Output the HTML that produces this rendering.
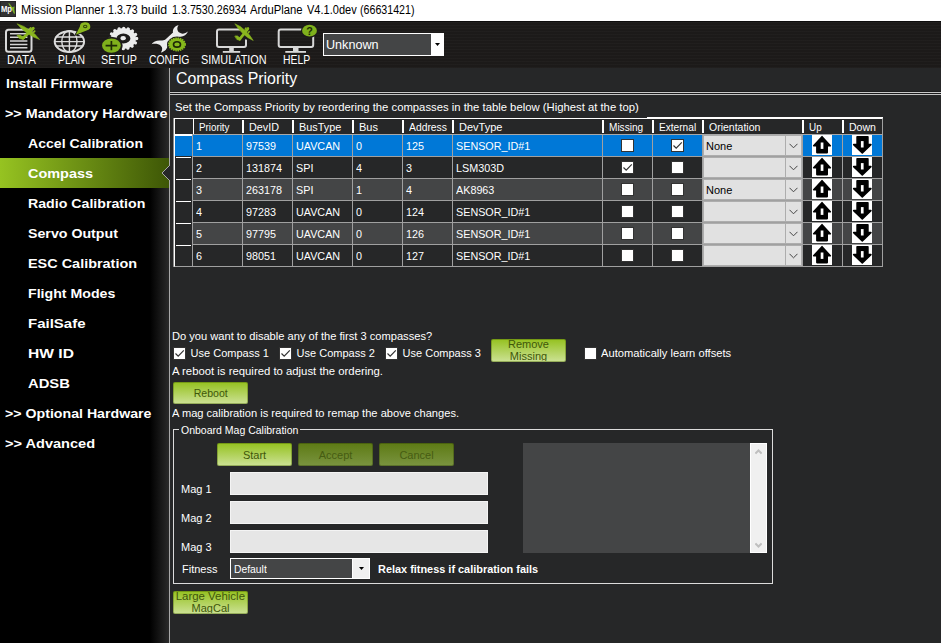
<!DOCTYPE html>
<html lang="en">
<head>
<meta charset="utf-8">
<title>Mission Planner</title>
<style>
*{box-sizing:border-box;margin:0;padding:0}
html,body{width:941px;height:643px;overflow:hidden}
body{position:relative;background:#262728;font-family:"Liberation Sans",sans-serif;font-size:11px;color:#fff}
.abs{position:absolute}
.t{position:absolute;white-space:nowrap;line-height:14px;font-size:11px}
#titlebar{left:0;top:0;width:941px;height:21px;background:#fff}
#title{left:21px;top:2px;font-size:12px;line-height:16px;color:#000}
#toolbar{left:0;top:21px;width:941px;height:47px;background:#1d1b1a;background-image:repeating-linear-gradient(180deg,rgba(255,255,255,0.015) 0,rgba(255,255,255,0.015) 1px,rgba(0,0,0,0.04) 1px,rgba(0,0,0,0.04) 3px);border-top:1px solid #0e0d0d}
.tl{position:absolute;top:53px;font-size:12px;line-height:14px;color:#fff;white-space:nowrap}
#side{left:0;top:68px;width:169px;height:575px;background:linear-gradient(90deg,#000 0,#000 150px,#2a2a2a 169px)}
#vline{left:169px;top:68px;width:1px;height:575px;background:#a8a8a8}
.mi{position:absolute;left:0;width:169px;height:30px;padding-top:1px;font-weight:bold;font-size:13px;line-height:30px;white-space:nowrap;color:#fff}
.mi.sel{background:linear-gradient(90deg,#96c321 0,#3e5706 100%)}
#hdr{left:175.5px;top:68px;font-size:16px;line-height:22px}
.hl{position:absolute;left:170px;width:771px;height:1px}
.gh{position:absolute;top:119px;font-size:11px;line-height:16px;white-space:nowrap}
.sep{position:absolute;top:120px;width:2px;height:13px;background:#fff}
.row{position:absolute;left:175px;width:707px;height:21px}
.c{position:absolute;font-size:11px;line-height:23px;white-space:nowrap}
.vl{position:absolute;top:135px;width:1px;height:132px;background:#a0a0a0}
.hg{position:absolute;left:193px;width:690px;height:1px;background:#a0a0a0}
.cb{position:absolute;width:13px;height:13px;background:#fff;border:1px solid #333}
.cb svg{position:absolute;left:0;top:0}
.combo{position:absolute;left:703px;width:99px;height:21px;background:#e1e1e1;border:1px solid #adadad;color:#000;font-size:11px;line-height:21px;padding-left:2px}
.combo i{position:absolute;left:81px;top:0;width:1px;height:19px;background:#adadad}
.combo svg{position:absolute;left:85px;top:7px}
.img{position:absolute;width:20px;height:20px;background:#fff}
.btn{position:absolute;width:75px;height:23px;border:1px solid rgba(70,95,5,0.4);border-radius:2px;background:linear-gradient(180deg,#94c11f,#cde296) border-box;color:#40570a;font-size:11px;text-align:center;line-height:21px;overflow:hidden}
.btn.dis{background:linear-gradient(180deg,#5d7a14,#7a9440) border-box;border-color:rgba(40,55,5,0.35);color:#465c12}
.btn.two{line-height:12px}
.inp{position:absolute;left:230px;width:258px;height:23px;background:#e6e6e6;border:1px solid #f4f4f4}
</style>
</head>
<body>
<div id="titlebar" class="abs"></div>
<div id="title" class="t" style="left:0;width:500px"><span style="position:absolute;left:20.98px;top:0;transform:scaleX(1.015);transform-origin:0 0;">Mission</span> <span style="position:absolute;left:65.25px;top:0;transform:scaleX(0.955);transform-origin:0 0;">Planner</span> <span style="position:absolute;left:108.31px;top:0;transform:scaleX(0.887);transform-origin:0 0;">1.3.73</span> <span style="position:absolute;left:140.88px;top:0;transform:scaleX(1.025);transform-origin:0 0;">build</span> <span style="position:absolute;left:171.71px;top:0;transform:scaleX(0.894);transform-origin:0 0;">1.3.7530.26934</span> <span style="position:absolute;left:250.3px;top:0;transform:scaleX(0.939);transform-origin:0 0;">ArduPlane</span> <span style="position:absolute;left:307.1px;top:0;transform:scaleX(0.919);transform-origin:0 0;">V4.1.0dev</span> <span style="position:absolute;left:360.41px;top:0;transform:scaleX(0.888);transform-origin:0 0;">(66631421)</span></div>
<div id="toolbar" class="abs"></div>
<div class="tl" id="tl_DATA" style="left:6.8px;transform:scaleX(0.956);transform-origin:0 0;">DATA</div>
<div class="tl" id="tl_PLAN" style="left:57.5px;transform:scaleX(0.863);transform-origin:0 0;">PLAN</div>
<div class="tl" id="tl_SETUP" style="left:101.3px;transform:scaleX(0.896);transform-origin:0 0;">SETUP</div>
<div class="tl" id="tl_CONFIG" style="left:148.8px;transform:scaleX(0.866);transform-origin:0 0;">CONFIG</div>
<div class="tl" id="tl_SIMULATION" style="left:200.8px;transform:scaleX(0.905);transform-origin:0 0;">SIMULATION</div>
<div class="tl" id="tl_HELP" style="left:282.8px;transform:scaleX(0.866);transform-origin:0 0;">HELP</div>
<svg class="abs" style="left:0;top:0" width="941" height="68" viewBox="0 0 941 68">
<defs>
<g id="plane" fill="#8ab61e" stroke="#8ab61e" stroke-linecap="round">
<path d="M0.6 0.5L6.9 3L12.7 6.6L18.2 10.95L22.8 16.1L16.3 13.45L10.3 9.8L4.8 5.3Z" stroke-width="0.6" stroke-linejoin="round"/>
<path d="M16.4 4.9L6.4 14.6" stroke-width="3"/>
<path d="M0.6 11.9L3.4 11.9L7.8 14.6L6.6 16L3 15.2Z" stroke-width="0.8" stroke-linejoin="round"/>
<path d="M12.9 5.4L13.9 4.4M16.9 8.8L17.9 7.8" stroke-width="1.7"/>
</g>
</defs>
<!-- title icon -->
<rect x="0" y="1" width="16" height="16" fill="#333"/>
<rect x="0.5" y="1.5" width="15" height="15" fill="none" stroke="#262626"/>
<path d="M8.2 3.2L9.6 3.6L12.2 7.2L14.6 6.6L14.2 9.2L15 13.6L14 13.8L12.2 10.2L11.4 8.2L9.4 5.6Z" fill="#7ab428"/>
<text x="1" y="12.4" font-family="Liberation Sans, sans-serif" font-size="8.6" font-weight="bold" fill="#fff" textLength="11" lengthAdjust="spacingAndGlyphs">Mp</text>
<!-- DATA -->
<rect x="6" y="29.7" width="25.5" height="22.1" rx="2.5" fill="#141312" stroke="#d8d8d8" stroke-width="2"/>
<path d="M10 33.7H27.4M10 37.3H27.4M10 41H27.4M10 44.4H27.4M10 47.8H27.4" stroke="#d4d4d4" stroke-width="1.5"/>
<use href="#plane" transform="translate(16.8 23.4)"/>
<!-- PLAN -->
<g fill="none" stroke="#dcdcdc" stroke-width="1.4">
<ellipse cx="69.4" cy="41.6" rx="14.7" ry="10.4" stroke-width="2"/>
<ellipse cx="69.4" cy="41.5" rx="7.6" ry="10.8"/>
<path d="M69.4 30.7V52.3M55.5 37H83.3M54.6 41.6H84.2M55.5 46H83.3"/>
</g>
<path d="M75.7 34.8L79.9 26.6A5.2 4.3 0 1 1 86.6 30.6Z" fill="#8ab61e" stroke="#1d1b1a" stroke-width="1.6" paint-order="stroke"/>
<ellipse cx="85.2" cy="26.4" rx="1.7" ry="1.2" fill="none" stroke="#33480a" stroke-width="1.1"/>
<!-- SETUP -->
<g>
<ellipse cx="123.4" cy="38.5" rx="13.3" ry="10.2" fill="none" stroke="#ececec" stroke-width="3.3" stroke-dasharray="0.01 4.62" stroke-linecap="round"/>
<ellipse cx="123.4" cy="38.5" rx="9.8" ry="7.7" fill="none" stroke="#ececec" stroke-width="5.6"/>
<ellipse cx="123.2" cy="38.2" rx="2.7" ry="2.1" fill="#ececec"/>
<ellipse cx="111.4" cy="45.6" rx="11.2" ry="8.8" fill="#1d1b1a"/>
<ellipse cx="111.4" cy="45.6" rx="9.4" ry="7.2" fill="#7fb01c"/>
<path d="M105.6 45.6H117.2M111.4 41V50.2" stroke="#1d2a05" stroke-width="1.7"/>
</g>
<!-- CONFIG -->
<g fill="#ececec">
<path d="M178.6 24.9C175.2 25.8 172.2 29 173 32.4L165.4 39.4C164 40.6 161.5 40.4 159.4 40.4C156.2 40.4 152.8 42 151.6 44.2C154.5 43.6 158.6 43.6 160.8 45.8C162.8 47.8 162.6 50.2 160.8 52.5C164.6 51.8 167.8 48.6 167.4 45.2L174.8 38.4C176.4 37 178.6 37 180.6 36.8C183.8 36.6 186.8 34.4 188 31.5C185.6 33.4 182 34.6 179.4 32.6C176.8 30.6 176.8 27.4 178.6 24.9Z"/>
</g>
<ellipse cx="177" cy="44.4" rx="10" ry="7.8" fill="#1d1b1a"/>
<ellipse cx="177" cy="44.4" rx="8.1" ry="6.1" fill="#86b81c" stroke="#86b81c" stroke-width="1.8" stroke-dasharray="1.5 0.75"/>
<ellipse cx="177" cy="44.4" rx="3.5" ry="2.7" fill="none" stroke="#1c2606" stroke-width="1.6"/>
<!-- SIMULATION -->
<rect x="217" y="29.5" width="29" height="17.5" rx="2" fill="none" stroke="#d8d8d8" stroke-width="2"/>
<rect x="229.2" y="48" width="4.6" height="3.2" fill="#d8d8d8"/>
<rect x="222.8" y="51" width="17.4" height="1.8" fill="#d8d8d8"/>
<path d="M240 27L250 27L250 37L246 40L240 33Z" fill="#1d1b1a"/>
<use href="#plane" transform="translate(234.7 23.4) scale(0.813 1.06)"/>
<!-- HELP -->
<rect x="278.7" y="29.5" width="34.5" height="17.5" rx="2" fill="none" stroke="#d8d8d8" stroke-width="2"/>
<rect x="293" y="48" width="5.5" height="3.2" fill="#d8d8d8"/>
<rect x="285.3" y="51" width="20.7" height="1.8" fill="#d8d8d8"/>
<ellipse cx="309.5" cy="30.7" rx="8.6" ry="7" fill="#1d1b1a"/>
<ellipse cx="309.5" cy="30.7" rx="7.4" ry="5.9" fill="#7fb01c"/>
<text x="306.3" y="34.6" font-family="Liberation Sans, sans-serif" font-size="10.5" font-weight="bold" fill="#1d2a05" textLength="6.6" lengthAdjust="spacingAndGlyphs">?</text>
</svg>
<div class="abs" style="left:323px;top:33px;width:121px;height:23px;background:#fff"></div>
<div class="abs" style="left:324px;top:34px;width:107px;height:21px;background:#444546"></div>
<div class="t" id="unk" style="left:326px;top:36.5px;font-size:12px;line-height:16px;transform:scaleX(1.05);transform-origin:0 0;">Unknown</div>
<svg class="abs" style="left:435px;top:43px" width="5" height="3"><path d="M0 0h5L2.5 3z" fill="#000"/></svg>
<div id="side" class="abs"></div>
<div id="vline" class="abs"></div>
<div class="mi" style="top:68px;padding-left:5.5px"><span style="display:inline-block;transform:scaleX(1.08);transform-origin:0 50%">Install Firmware</span></div>
<div class="mi" style="top:98px;padding-left:4.9px"><span style="display:inline-block;transform:scaleX(1.102);transform-origin:0 50%">&gt;&gt; Mandatory Hardware</span></div>
<div class="mi" style="top:128px;padding-left:27.5px"><span style="display:inline-block;transform:scaleX(1.083);transform-origin:0 50%">Accel Calibration</span></div>
<div class="mi sel" style="top:158px;padding-left:27.5px"><span style="display:inline-block;transform:scaleX(1.112);transform-origin:0 50%">Compass</span></div>
<div class="mi" style="top:188px;padding-left:28px"><span style="display:inline-block;transform:scaleX(1.09);transform-origin:0 50%">Radio Calibration</span></div>
<div class="mi" style="top:218px;padding-left:27.5px"><span style="display:inline-block;transform:scaleX(1.092);transform-origin:0 50%">Servo Output</span></div>
<div class="mi" style="top:248px;padding-left:28px"><span style="display:inline-block;transform:scaleX(1.11);transform-origin:0 50%">ESC Calibration</span></div>
<div class="mi" style="top:278px;padding-left:28px"><span style="display:inline-block;transform:scaleX(1.089);transform-origin:0 50%">Flight Modes</span></div>
<div class="mi" style="top:308px;padding-left:28px"><span style="display:inline-block;transform:scaleX(1.153);transform-origin:0 50%">FailSafe</span></div>
<div class="mi" style="top:338px;padding-left:28px"><span style="display:inline-block;transform:scaleX(1.2);transform-origin:0 50%">HW ID</span></div>
<div class="mi" style="top:368px;padding-left:27.7px"><span style="display:inline-block;transform:scaleX(1.138);transform-origin:0 50%">ADSB</span></div>
<div class="mi" style="top:398px;padding-left:5.2px"><span style="display:inline-block;transform:scaleX(1.09);transform-origin:0 50%">&gt;&gt; Optional Hardware</span></div>
<div class="mi" style="top:428px;padding-left:5.2px"><span style="display:inline-block;transform:scaleX(1.12);transform-origin:0 50%">&gt;&gt; Advanced</span></div>
<svg class="abs" style="left:162px;top:165px" width="8" height="16"><path d="M8 0L0 8L8 16z" fill="#262728"/><path d="M8 0L0 8L8 16" fill="none" stroke="#a8a8a8" stroke-width="1"/></svg>
<div id="hdr" class="t" style="transform:scaleX(0.995);transform-origin:0 0;">Compass Priority</div>
<div class="hl" style="top:91px;background:#1c1c1d"></div>
<div class="hl" style="top:92px;background:#c8c8c8"></div>
<div class="hl" style="top:93px;background:#1a1a1b"></div>
<div class="hl" style="top:94px;background:#c4c4c4"></div>
<div class="t" id="settxt" style="left:174.8px;top:100px;transform:scaleX(1.0264);transform-origin:0 0;">Set the Compass Priority by reordering the compasses in the table below (Highest at the top)</div>
<div class="abs" style="left:174px;top:118px;width:709px;height:149px;border:1px solid #a0a0a0;border-top-color:#fff;border-left-color:#fff"></div>
<div class="abs" style="left:647px;top:117px;width:236px;height:1px;background:#fff"></div>
<div class="abs" style="left:173px;top:118px;width:1px;height:149px;background:#8c8c8c"></div>
<div class="abs" style="left:175px;top:134px;width:707px;height:1px;background:#a8a8a8"></div>
<div class="abs" style="left:175px;top:134px;width:17px;height:2px;background:#fff"></div>
<div class="sep" style="left:193px;top:119px;height:15px;width:1px"></div>
<div class="gh" style="left:199px;transform:scaleX(0.89);transform-origin:0 0;">Priority</div>
<div class="sep" style="left:242px"></div>
<div class="gh" style="left:249px;transform:scaleX(0.98);transform-origin:0 0;">DevID</div>
<div class="sep" style="left:292px"></div>
<div class="gh" style="left:299px;transform:scaleX(0.987);transform-origin:0 0;">BusType</div>
<div class="sep" style="left:352px"></div>
<div class="gh" style="left:359px;">Bus</div>
<div class="sep" style="left:402px"></div>
<div class="gh" style="left:409px;transform:scaleX(0.94);transform-origin:0 0;">Address</div>
<div class="sep" style="left:452px"></div>
<div class="gh" style="left:459px;">DevType</div>
<div class="sep" style="left:602px"></div>
<div class="gh" style="left:609px;transform:scaleX(0.915);transform-origin:0 0;">Missing</div>
<div class="sep" style="left:652px"></div>
<div class="gh" style="left:659px;transform:scaleX(0.92);transform-origin:0 0;">External</div>
<div class="sep" style="left:702px"></div>
<div class="gh" style="left:709px;transform:scaleX(0.954);transform-origin:0 0;">Orientation</div>
<div class="sep" style="left:802px"></div>
<div class="gh" style="left:809px;transform:scaleX(0.9);transform-origin:0 0;">Up</div>
<div class="sep" style="left:842px"></div>
<div class="gh" style="left:849px;transform:scaleX(0.955);transform-origin:0 0;">Down</div>
<div class="abs" style="left:193px;top:135px;width:689px;height:21px;background:#0078d7"></div>
<div class="abs" style="left:175px;top:136px;width:17px;height:20px;background:#0078d7"></div>
<div class="abs" style="left:176px;top:157px;width:15px;height:1px;background:#fff"></div>
<div class="c" style="left:196px;top:135px;transform:scaleX(0.98);transform-origin:0 0;">1</div>
<div class="c" style="left:246px;top:135px;transform:scaleX(0.98);transform-origin:0 0;">97539</div>
<div class="c" style="left:296px;top:135px;transform:scaleX(0.98);transform-origin:0 0;">UAVCAN</div>
<div class="c" style="left:356px;top:135px;transform:scaleX(0.98);transform-origin:0 0;">0</div>
<div class="c" style="left:406px;top:135px;transform:scaleX(0.98);transform-origin:0 0;">125</div>
<div class="c" style="left:456px;top:135px;transform:scaleX(0.98);transform-origin:0 0;">SENSOR_ID#1</div>
<div class="cb" style="left:621px;top:139px"></div>
<div class="cb" style="left:671px;top:139px"><svg width="11" height="11" viewBox="0 0 11 11"><path d="M1.5 5.5L4.2 8.2L9.8 2.4" fill="none" stroke="#333" stroke-width="1.2"/></svg></div>
<div class="combo" style="top:135px">None<i></i><svg width="9" height="6" viewBox="0 0 9 6"><path d="M0.5 0.8L4.5 4.8L8.5 0.8" fill="none" stroke="#444" stroke-width="1"/></svg></div>
<div class="img" style="left:812px;top:135px"><svg width="20" height="20" viewBox="0 0 20 20"><path d="M10 1.7L18.3 10.8H15.2V17.6H4.9V10.8H1.7Z" fill="#000" stroke="#000" stroke-width="1.6" stroke-linejoin="round"/><rect x="8.7" y="7.5" width="2.7" height="6.4" fill="#fff"/></svg></div>
<div class="img" style="left:852px;top:135px"><svg width="20" height="20" viewBox="0 0 20 20"><path d="M10.3 17.9L1.7 9.6H5.1V1.7H15.9V9.6H18.9Z" fill="#000" stroke="#000" stroke-width="1.6" stroke-linejoin="round"/><rect x="8.9" y="6.1" width="2.7" height="6.4" fill="#fff"/></svg></div>
<div class="hg" style="top:156px"></div>
<div class="abs" style="left:193px;top:157px;width:689px;height:21px;background:#262728"></div>
<div class="abs" style="left:176px;top:179px;width:15px;height:1px;background:#fff"></div>
<div class="c" style="left:196px;top:157px;transform:scaleX(0.98);transform-origin:0 0;">2</div>
<div class="c" style="left:246px;top:157px;transform:scaleX(0.98);transform-origin:0 0;">131874</div>
<div class="c" style="left:296px;top:157px;transform:scaleX(0.98);transform-origin:0 0;">SPI</div>
<div class="c" style="left:356px;top:157px;transform:scaleX(0.98);transform-origin:0 0;">4</div>
<div class="c" style="left:406px;top:157px;transform:scaleX(0.98);transform-origin:0 0;">3</div>
<div class="c" style="left:456px;top:157px;transform:scaleX(0.98);transform-origin:0 0;">LSM303D</div>
<div class="cb" style="left:621px;top:161px"><svg width="11" height="11" viewBox="0 0 11 11"><path d="M1.5 5.5L4.2 8.2L9.8 2.4" fill="none" stroke="#333" stroke-width="1.2"/></svg></div>
<div class="cb" style="left:671px;top:161px"></div>
<div class="combo" style="top:157px"><i></i><svg width="9" height="6" viewBox="0 0 9 6"><path d="M0.5 0.8L4.5 4.8L8.5 0.8" fill="none" stroke="#444" stroke-width="1"/></svg></div>
<div class="img" style="left:812px;top:157px"><svg width="20" height="20" viewBox="0 0 20 20"><path d="M10 1.7L18.3 10.8H15.2V17.6H4.9V10.8H1.7Z" fill="#000" stroke="#000" stroke-width="1.6" stroke-linejoin="round"/><rect x="8.7" y="7.5" width="2.7" height="6.4" fill="#fff"/></svg></div>
<div class="img" style="left:852px;top:157px"><svg width="20" height="20" viewBox="0 0 20 20"><path d="M10.3 17.9L1.7 9.6H5.1V1.7H15.9V9.6H18.9Z" fill="#000" stroke="#000" stroke-width="1.6" stroke-linejoin="round"/><rect x="8.9" y="6.1" width="2.7" height="6.4" fill="#fff"/></svg></div>
<div class="hg" style="top:178px"></div>
<div class="abs" style="left:193px;top:179px;width:689px;height:21px;background:#444546"></div>
<div class="abs" style="left:176px;top:201px;width:15px;height:1px;background:#fff"></div>
<div class="c" style="left:196px;top:179px;transform:scaleX(0.98);transform-origin:0 0;">3</div>
<div class="c" style="left:246px;top:179px;transform:scaleX(0.98);transform-origin:0 0;">263178</div>
<div class="c" style="left:296px;top:179px;transform:scaleX(0.98);transform-origin:0 0;">SPI</div>
<div class="c" style="left:356px;top:179px;transform:scaleX(0.98);transform-origin:0 0;">1</div>
<div class="c" style="left:406px;top:179px;transform:scaleX(0.98);transform-origin:0 0;">4</div>
<div class="c" style="left:456px;top:179px;transform:scaleX(0.98);transform-origin:0 0;">AK8963</div>
<div class="cb" style="left:621px;top:183px"></div>
<div class="cb" style="left:671px;top:183px"></div>
<div class="combo" style="top:179px">None<i></i><svg width="9" height="6" viewBox="0 0 9 6"><path d="M0.5 0.8L4.5 4.8L8.5 0.8" fill="none" stroke="#444" stroke-width="1"/></svg></div>
<div class="img" style="left:812px;top:179px"><svg width="20" height="20" viewBox="0 0 20 20"><path d="M10 1.7L18.3 10.8H15.2V17.6H4.9V10.8H1.7Z" fill="#000" stroke="#000" stroke-width="1.6" stroke-linejoin="round"/><rect x="8.7" y="7.5" width="2.7" height="6.4" fill="#fff"/></svg></div>
<div class="img" style="left:852px;top:179px"><svg width="20" height="20" viewBox="0 0 20 20"><path d="M10.3 17.9L1.7 9.6H5.1V1.7H15.9V9.6H18.9Z" fill="#000" stroke="#000" stroke-width="1.6" stroke-linejoin="round"/><rect x="8.9" y="6.1" width="2.7" height="6.4" fill="#fff"/></svg></div>
<div class="hg" style="top:200px"></div>
<div class="abs" style="left:193px;top:201px;width:689px;height:21px;background:#262728"></div>
<div class="abs" style="left:176px;top:223px;width:15px;height:1px;background:#fff"></div>
<div class="c" style="left:196px;top:201px;transform:scaleX(0.98);transform-origin:0 0;">4</div>
<div class="c" style="left:246px;top:201px;transform:scaleX(0.98);transform-origin:0 0;">97283</div>
<div class="c" style="left:296px;top:201px;transform:scaleX(0.98);transform-origin:0 0;">UAVCAN</div>
<div class="c" style="left:356px;top:201px;transform:scaleX(0.98);transform-origin:0 0;">0</div>
<div class="c" style="left:406px;top:201px;transform:scaleX(0.98);transform-origin:0 0;">124</div>
<div class="c" style="left:456px;top:201px;transform:scaleX(0.98);transform-origin:0 0;">SENSOR_ID#1</div>
<div class="cb" style="left:621px;top:205px"></div>
<div class="cb" style="left:671px;top:205px"></div>
<div class="combo" style="top:201px"><i></i><svg width="9" height="6" viewBox="0 0 9 6"><path d="M0.5 0.8L4.5 4.8L8.5 0.8" fill="none" stroke="#444" stroke-width="1"/></svg></div>
<div class="img" style="left:812px;top:201px"><svg width="20" height="20" viewBox="0 0 20 20"><path d="M10 1.7L18.3 10.8H15.2V17.6H4.9V10.8H1.7Z" fill="#000" stroke="#000" stroke-width="1.6" stroke-linejoin="round"/><rect x="8.7" y="7.5" width="2.7" height="6.4" fill="#fff"/></svg></div>
<div class="img" style="left:852px;top:201px"><svg width="20" height="20" viewBox="0 0 20 20"><path d="M10.3 17.9L1.7 9.6H5.1V1.7H15.9V9.6H18.9Z" fill="#000" stroke="#000" stroke-width="1.6" stroke-linejoin="round"/><rect x="8.9" y="6.1" width="2.7" height="6.4" fill="#fff"/></svg></div>
<div class="hg" style="top:222px"></div>
<div class="abs" style="left:193px;top:223px;width:689px;height:21px;background:#444546"></div>
<div class="abs" style="left:176px;top:245px;width:15px;height:1px;background:#fff"></div>
<div class="c" style="left:196px;top:223px;transform:scaleX(0.98);transform-origin:0 0;">5</div>
<div class="c" style="left:246px;top:223px;transform:scaleX(0.98);transform-origin:0 0;">97795</div>
<div class="c" style="left:296px;top:223px;transform:scaleX(0.98);transform-origin:0 0;">UAVCAN</div>
<div class="c" style="left:356px;top:223px;transform:scaleX(0.98);transform-origin:0 0;">0</div>
<div class="c" style="left:406px;top:223px;transform:scaleX(0.98);transform-origin:0 0;">126</div>
<div class="c" style="left:456px;top:223px;transform:scaleX(0.98);transform-origin:0 0;">SENSOR_ID#1</div>
<div class="cb" style="left:621px;top:227px"></div>
<div class="cb" style="left:671px;top:227px"></div>
<div class="combo" style="top:223px"><i></i><svg width="9" height="6" viewBox="0 0 9 6"><path d="M0.5 0.8L4.5 4.8L8.5 0.8" fill="none" stroke="#444" stroke-width="1"/></svg></div>
<div class="img" style="left:812px;top:223px"><svg width="20" height="20" viewBox="0 0 20 20"><path d="M10 1.7L18.3 10.8H15.2V17.6H4.9V10.8H1.7Z" fill="#000" stroke="#000" stroke-width="1.6" stroke-linejoin="round"/><rect x="8.7" y="7.5" width="2.7" height="6.4" fill="#fff"/></svg></div>
<div class="img" style="left:852px;top:223px"><svg width="20" height="20" viewBox="0 0 20 20"><path d="M10.3 17.9L1.7 9.6H5.1V1.7H15.9V9.6H18.9Z" fill="#000" stroke="#000" stroke-width="1.6" stroke-linejoin="round"/><rect x="8.9" y="6.1" width="2.7" height="6.4" fill="#fff"/></svg></div>
<div class="hg" style="top:244px"></div>
<div class="abs" style="left:193px;top:245px;width:689px;height:21px;background:#262728"></div>
<div class="c" style="left:196px;top:245px;transform:scaleX(0.98);transform-origin:0 0;">6</div>
<div class="c" style="left:246px;top:245px;transform:scaleX(0.98);transform-origin:0 0;">98051</div>
<div class="c" style="left:296px;top:245px;transform:scaleX(0.98);transform-origin:0 0;">UAVCAN</div>
<div class="c" style="left:356px;top:245px;transform:scaleX(0.98);transform-origin:0 0;">0</div>
<div class="c" style="left:406px;top:245px;transform:scaleX(0.98);transform-origin:0 0;">127</div>
<div class="c" style="left:456px;top:245px;transform:scaleX(0.98);transform-origin:0 0;">SENSOR_ID#1</div>
<div class="cb" style="left:621px;top:249px"></div>
<div class="cb" style="left:671px;top:249px"></div>
<div class="combo" style="top:245px"><i></i><svg width="9" height="6" viewBox="0 0 9 6"><path d="M0.5 0.8L4.5 4.8L8.5 0.8" fill="none" stroke="#444" stroke-width="1"/></svg></div>
<div class="img" style="left:812px;top:245px"><svg width="20" height="20" viewBox="0 0 20 20"><path d="M10 1.7L18.3 10.8H15.2V17.6H4.9V10.8H1.7Z" fill="#000" stroke="#000" stroke-width="1.6" stroke-linejoin="round"/><rect x="8.7" y="7.5" width="2.7" height="6.4" fill="#fff"/></svg></div>
<div class="img" style="left:852px;top:245px"><svg width="20" height="20" viewBox="0 0 20 20"><path d="M10.3 17.9L1.7 9.6H5.1V1.7H15.9V9.6H18.9Z" fill="#000" stroke="#000" stroke-width="1.6" stroke-linejoin="round"/><rect x="8.9" y="6.1" width="2.7" height="6.4" fill="#fff"/></svg></div>
<div class="hg" style="top:266px"></div>
<div class="vl" style="left:242px"></div>
<div class="vl" style="left:292px"></div>
<div class="vl" style="left:352px"></div>
<div class="vl" style="left:402px"></div>
<div class="vl" style="left:452px"></div>
<div class="vl" style="left:602px"></div>
<div class="vl" style="left:652px"></div>
<div class="vl" style="left:702px"></div>
<div class="vl" style="left:802px"></div>
<div class="vl" style="left:842px"></div>
<div class="vl" style="left:882px"></div>
<div class="vl" style="left:192px;background:#a0a0a0"></div>
<div class="t" id="doyou" style="left:172px;top:329px;transform:scaleX(1.0105);transform-origin:0 0;">Do you want to disable any of the first 3 compasses?</div>
<div class="cb" style="left:173px;top:347px"><svg width="11" height="11" viewBox="0 0 11 11"><path d="M1.5 5.5L4.2 8.2L9.8 2.4" fill="none" stroke="#333" stroke-width="1.2"/></svg></div>
<div class="t uc" style="left:190.6px;top:346px">Use Compass 1</div>
<div class="cb" style="left:279px;top:347px"><svg width="11" height="11" viewBox="0 0 11 11"><path d="M1.5 5.5L4.2 8.2L9.8 2.4" fill="none" stroke="#333" stroke-width="1.2"/></svg></div>
<div class="t uc" style="left:296.6px;top:346px">Use Compass 2</div>
<div class="cb" style="left:385px;top:347px"><svg width="11" height="11" viewBox="0 0 11 11"><path d="M1.5 5.5L4.2 8.2L9.8 2.4" fill="none" stroke="#333" stroke-width="1.2"/></svg></div>
<div class="t uc" style="left:402.6px;top:346px">Use Compass 3</div>
<div class="btn two" style="left:491px;top:339px"><div style="margin-top:-2.2px">Remove<br>Missing</div></div>
<div class="cb" style="left:584px;top:347px"></div>
<div class="t" id="auto" style="left:601px;top:346px;transform:scaleX(1.015);transform-origin:0 0;">Automatically learn offsets</div>
<div class="t" id="reb" style="left:172px;top:364px;transform:scaleX(1.03);transform-origin:0 0;">A reboot is required to adjust the ordering.</div>
<div class="btn" style="left:173px;top:382px;height:22px;line-height:20px"><span style="display:inline-block;transform:scaleX(0.96)">Reboot</span></div>
<div class="t" id="magc" style="left:172px;top:406px;transform:scaleX(1.0095);transform-origin:0 0;">A mag calibration is required to remap the above changes.</div>
<div class="abs" style="left:173px;top:429px;width:600px;height:155px;border:1px solid #dcdcdc"></div>
<div class="t" id="gbl" style="left:179px;top:423px;background:#262728;padding:0 2px 0 1.5px"><span style="display:inline-block;transform:scaleX(0.955);transform-origin:0 0;;margin-right:-5px">Onboard Mag Calibration</span></div>
<div class="btn" style="left:217px;top:443px;padding-top:1px">Start</div>
<div class="btn dis" style="left:298px;top:443px;padding-top:1px">Accept</div>
<div class="btn dis" style="left:379px;top:443px;padding-top:1px">Cancel</div>
<div class="inp" style="top:472px"></div>
<div class="t" style="left:181px;top:482px">Mag 1</div>
<div class="inp" style="top:501px"></div>
<div class="t" style="left:181px;top:511px">Mag 2</div>
<div class="inp" style="top:530px"></div>
<div class="t" style="left:181px;top:540px">Mag 3</div>
<div class="abs" style="left:523px;top:443px;width:244px;height:110px;background:#444546"></div>
<div class="abs" style="left:750px;top:443px;width:17px;height:110px;background:#f0f0f0;border:1px solid #fff"></div>
<svg class="abs" style="left:755px;top:449px" width="7" height="6"><path d="M0.4 4.6L3.5 1.5L6.6 4.6" fill="none" stroke="#bfbfbf" stroke-width="2"/></svg>
<svg class="abs" style="left:755px;top:542px" width="7" height="6"><path d="M0.4 1.4L3.5 4.5L6.6 1.4" fill="none" stroke="#bfbfbf" stroke-width="2"/></svg>
<div class="t" style="left:182px;top:562px">Fitness</div>
<div class="abs" style="left:230px;top:558px;width:140px;height:21px;background:#fff"></div>
<div class="abs" style="left:231px;top:559px;width:121px;height:19px;background:#444546"></div>
<div class="abs" style="left:353px;top:559px;width:16px;height:19px;background:#f0f0f0"></div>
<svg class="abs" style="left:359px;top:567px" width="5" height="3"><path d="M0 0h5L2.5 3z" fill="#000"/></svg>
<div class="t" style="left:234px;top:562px;transform:scaleX(0.94);transform-origin:0 0;">Default</div>
<div class="t" id="relax" style="left:378px;top:562px;font-weight:bold;transform:scaleX(0.992);transform-origin:0 0;">Relax fitness if calibration fails</div>
<div class="btn two" style="left:173px;top:591px"><div style="margin-top:-2px;margin-left:-5px;margin-right:-5px"><span style="display:inline-block;transform:scaleX(1.04)">Large Vehicle</span><br>MagCal</div></div>
</body>
</html>
